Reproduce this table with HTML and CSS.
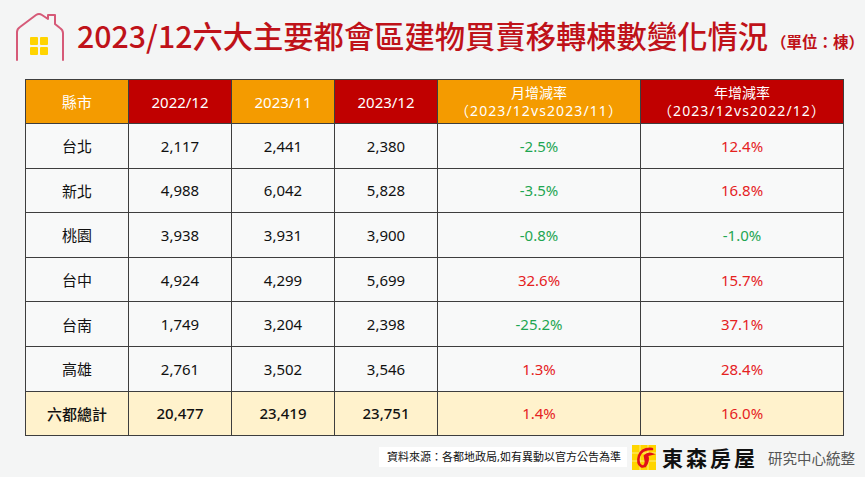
FILE: index.html
```html
<!DOCTYPE html>
<html lang="zh-Hant">
<head>
<meta charset="utf-8">
<link rel="stylesheet" href="styles.css">
</head>
<body>
<div class="page">
  <div class="title-row">
    <svg class="house" width="52" height="52" viewBox="0 0 52 52">
      <path d="M3 48 V20 Q3 17 6 15 L22 3 Q25 1 28 3 L34 7 V3 H41 V12 L46 16 Q49 18 49 21 V48" fill="none" stroke="#d65a78" stroke-width="2" stroke-linejoin="round" stroke-linecap="round"/>
      <rect x="16" y="25" width="8" height="8" rx="1" fill="#ffd400"/>
      <rect x="26" y="25" width="8" height="8" rx="1" fill="#ffd400"/>
      <rect x="16" y="35" width="8" height="8" rx="1" fill="#ffd400"/>
      <rect x="26" y="35" width="8" height="8" rx="1" fill="#ffd400"/>
    </svg>
    <h1 class="title">2023/12六大主要都會區建物買賣移轉棟數變化情況<span class="unit">（單位：棟）</span></h1>
  </div>

  <table class="data">
    <thead>
      <tr>
        <th class="or">縣市</th>
        <th class="rd">2022/12</th>
        <th class="or">2023/11</th>
        <th class="rd">2023/12</th>
        <th class="or wide"><span class="l1">月增減率</span><span class="l2">（2023/12vs2023/11）</span></th>
        <th class="rd wide"><span class="l1">年增減率</span><span class="l2">（2023/12vs2022/12）</span></th>
      </tr>
    </thead>
    <tbody>
      <tr><td>台北</td><td>2,117</td><td>2,441</td><td>2,380</td><td class="g">-2.5%</td><td class="r">12.4%</td></tr>
      <tr><td>新北</td><td>4,988</td><td>6,042</td><td>5,828</td><td class="g">-3.5%</td><td class="r">16.8%</td></tr>
      <tr><td>桃園</td><td>3,938</td><td>3,931</td><td>3,900</td><td class="g">-0.8%</td><td class="g">-1.0%</td></tr>
      <tr><td>台中</td><td>4,924</td><td>4,299</td><td>5,699</td><td class="r">32.6%</td><td class="r">15.7%</td></tr>
      <tr><td>台南</td><td>1,749</td><td>3,204</td><td>2,398</td><td class="g">-25.2%</td><td class="r">37.1%</td></tr>
      <tr><td>高雄</td><td>2,761</td><td>3,502</td><td>3,546</td><td class="r">1.3%</td><td class="r">28.4%</td></tr>
      <tr class="total"><td>六都總計</td><td>20,477</td><td>23,419</td><td>23,751</td><td class="r">1.4%</td><td class="r">16.0%</td></tr>
    </tbody>
  </table>

  <div class="footer">
    <div class="source">資料來源：各都地政局,如有異動以官方公告為準</div>
    <svg class="logo" width="24" height="25" viewBox="0 0 24 25">
      <rect width="24" height="25" fill="#ffd500"/>
      <path d="M8 0 V25 M16 0 V25 M0 8 H24 M0 16 H24" stroke="#fff3a0" stroke-width="0.8"/>
      <path d="M20 4 Q10 3 7 11 Q5 18 9 21 Q13 23 14 17 L13 11 Q16 8 19 9 L15 10 Q17 16 13 21" fill="none" stroke="#e0101a" stroke-width="2.6" stroke-linecap="round"/>
    </svg>
    <span class="brand">東森房屋</span>
    <span class="dept">研究中心統整</span>
  </div>
</div>
</body>
</html>
```

FILE: styles.css
```css
html, body {
  margin: 0;
  padding: 0;
  background: #f4f5f5;
}
body {
  font-family: "Noto Sans", "Noto Sans CJK TC", sans-serif;
  color: #111;
}
.page {
  width: 865px;
  height: 477px;
  overflow: hidden;
}
.title-row {
  display: flex;
  align-items: center;
  padding: 11px 0 0 14px;
  height: 54px;
  gap: 11px;
}
.house {
  flex: none;
}
.title {
  margin: 0;
  font-family: "Noto Sans CJK TC", sans-serif;
  font-weight: 500;
  font-size: 30.3px;
  line-height: 36px;
  color: #bf1219;
  white-space: nowrap;
}
.unit {
  font-size: 15.5px;
  font-weight: 700;
  margin-left: 3px;
}
.data {
  margin: 14px 0 0 25px;
  border-collapse: collapse;
  width: 816px;
  table-layout: fixed;
}
.data th, .data td {
  border: 1px solid #3e3e3e;
  text-align: center;
  padding: 0;
}
.data th {
  height: 43px;
  width: 102px;
  color: #fff;
  font-weight: 400;
  font-size: 15px;
  line-height: 18px;
}
.data th.wide {
  width: 202px;
  font-size: 14px;
}
.l1, .l2 {
  display: block;
  line-height: 18px;
}
.l2 {
  letter-spacing: 1.1px;
}
.or { background: #f49b00; }
.rd { background: #c00000; }
.data td {
  height: 43.6px;
  background: #f8f9f9;
  font-size: 15px;
}
.data .g { color: #1fa652; }
.data .r { color: #e5221f; }
.data tr.total td {
  background: #fff2cc;
  font-weight: 500;
}
.data tr.total td.r {
  font-weight: 400;
}
.footer {
  display: flex;
  justify-content: flex-end;
  align-items: center;
  padding-right: 10px;
  margin-top: 6px;
  height: 30px;
}
.source {
  background: #ffffff;
  font-size: 11px;
  padding: 2px 6px 2px 8px;
  height: 16px;
  line-height: 16px;
  color: #111;
  margin-right: 5px;
}
.logo {
  flex: none;
  margin-right: 6px;
}
.brand {
  font-family: "Noto Sans CJK TC", serif;
  font-size: 21px;
  font-weight: 700;
  letter-spacing: 3px;
  color: #111;
  margin-right: 10px;
}
.dept {
  font-family: "Noto Sans CJK TC", sans-serif;
  font-size: 14.5px;
  color: #555;
}
```
